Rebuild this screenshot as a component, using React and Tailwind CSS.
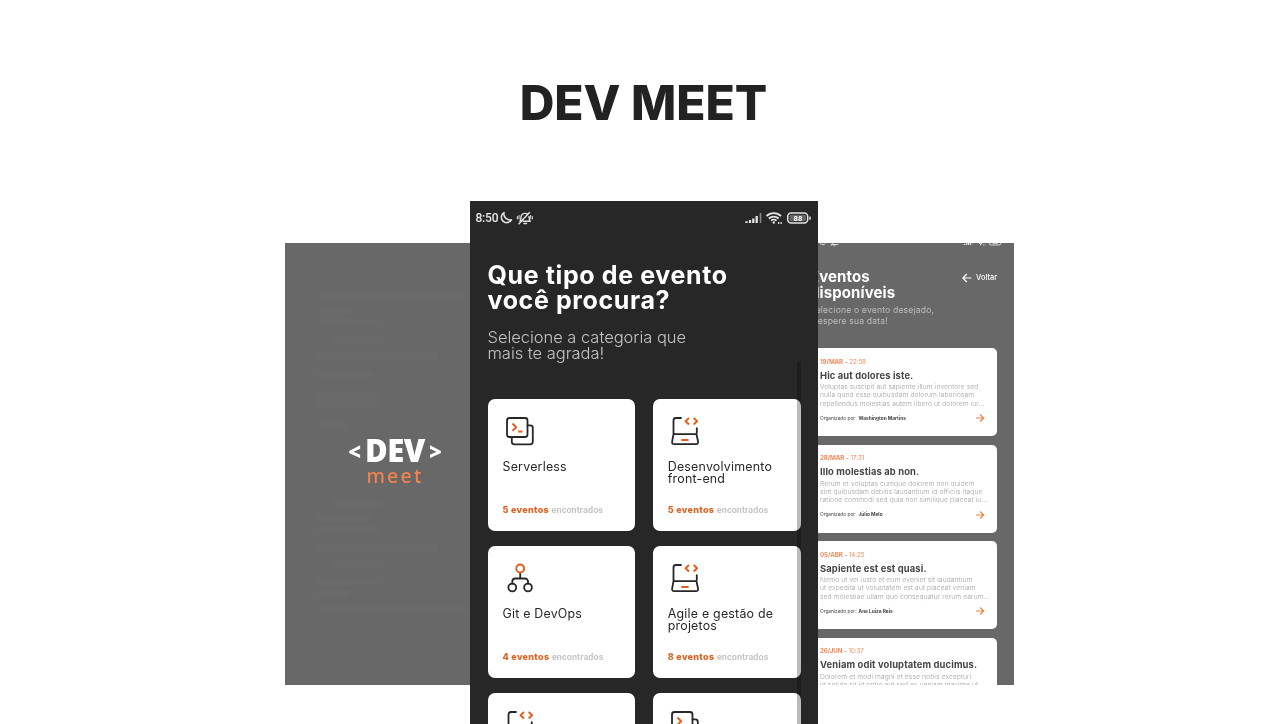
import React from "react";

const INK = "#272727";
const ORANGE = "#e4601f";

const ServerlessIcon = () => (
  <svg className="block" width="34" height="34" viewBox="0 0 34 34" fill="none" stroke={INK} strokeWidth="1.8" strokeLinecap="round" strokeLinejoin="round">
    <rect x="4" y="4" width="20.5" height="19" rx="2.5" />
    <path d="M24.500 11.300h2.800a2.500 2.500 0 0 1 2.500 2.500v14a2.500 2.500 0 0 1-2.500 2.500h-16a2.500 2.500 0 0 1-2.500-2.500V23" />
    <path d="M9.500 9.500l3.600 3.700-3.600 3.700M15.200 17.600h4.300" stroke={ORANGE} strokeWidth="2" strokeLinecap="butt" />
  </svg>
);

const LaptopIcon = () => (
  <svg className="block" width="34" height="34" viewBox="0 0 34 34" fill="none" stroke={INK} strokeWidth="1.8" strokeLinecap="round" strokeLinejoin="round">
    <path d="M13 4H8A2.500 2.500 0 0 0 5.500 6.500v13.700h22.500c.7 0 .8-1 .8-1.700v-4.300M5.500 20.200l-1.400 7.500a2 2 0 0 0 2 2.500h22a2 2 0 0 0 2-2.500l-1.600-7.500" />
    <path d="M21 3.900l-3.400 3.300 3.400 3.300M25.700 3.900l3.400 3.300-3.400 3.300M13.300 26h7.300" stroke={ORANGE} strokeWidth="2" strokeLinecap="butt" />
  </svg>
);

const GitIcon = () => (
  <svg className="block" width="34" height="34" viewBox="0 0 34 34" fill="none" stroke={INK} strokeWidth="1.8" strokeLinecap="round" strokeLinejoin="round">
    <circle cx="9.300" cy="26.500" r="3.900" />
    <circle cx="25" cy="26.500" r="3.900" />
    <path d="M9.300 22.500v-2a3 3 0 0 1 3-3H22a3 3 0 0 1 3 3v2M17.200 17v-5" />
    <circle cx="17.200" cy="7.500" r="3.900" stroke={ORANGE} strokeWidth="2" />
  </svg>
);

const StatusLeft = () => (
  <svg className="block" width="36" height="16" viewBox="0 0 36 16" fill="none" stroke="#e4e4e4" strokeWidth="1.4" strokeLinecap="round" strokeLinejoin="round">
    <path d="M6 2.600A5.400 5.400 0 1 0 13.500 9.800C9.700 10.800 5 7.500 6 2.600z" strokeWidth="1.500" />
    <path d="M22 11.300c1.500-1.500.5-4 1.500-6 1.200-2.300 4.500-2.600 6-.8M31 6.500c.3 2 .2 3.700 1.200 4.800h-7M26 13.500h2.500M21 13.700L31.500 2.500" />
    <path d="M19.300 6.500v2.500M21 5.500v3.500M32.700 5.500v3M34.300 6.500v2.500" strokeWidth="1" />
  </svg>
);

const StatusRight = () => (
  <svg className="block" width="66" height="16" viewBox="0 0 66 16" fill="none" stroke="#e4e4e4">
    <path d="M1.500 13v-1.800M5 13v-3M8.300 13V8.500M11.700 13V6" strokeWidth="2.300" />
    <path d="M15.500 13V3" stroke="#888" strokeWidth="1.600" />
    <path d="M21.500 6.200c4-4 10.500-4 14.500 0M23.800 8.500c2.800-2.600 7-2.600 9.900 0M26 10.700c1.500-1.400 4-1.400 5.500 0" strokeWidth="1.800" />
    <circle cx="28.800" cy="12.500" r="1.200" fill="#e4e4e4" stroke="none" />
    <path d="M33 13h1.300M35.500 13h1.300" strokeWidth="1.800" />
    <rect x="42.700" y="3" width="20" height="10" rx="3.500" strokeWidth="1.500" />
    <path d="M65 6.500v3.300" strokeWidth="1.500" />
    <rect x="44.500" y="4.800" width="16.500" height="6.500" rx="1.500" fill="#666" stroke="none" />
    <text x="52.900" y="10.800" textAnchor="middle" fill="#fff" stroke="none" fontFamily="Roboto, sans-serif" fontWeight="700" fontSize="7.8">88</text>
  </svg>
);

const categories = [
  { icon: ServerlessIcon, lines: ["Serverless"], count: 5 },
  { icon: LaptopIcon, lines: ["Desenvolvimento", "front-end"], count: 5 },
  { icon: GitIcon, lines: ["Git e DevOps"], count: 4 },
  { icon: LaptopIcon, lines: ["Agile e gestão de", "projetos"], count: 8 },
  { icon: LaptopIcon, lines: [], count: 0 },
  { icon: ServerlessIcon, lines: [], count: 0 },
];

const CategoryCard = ({ icon: Icon, lines, count }) => (
  <div className="h-[132px] rounded-[7px] bg-white px-[15px] pt-[15px]">
    <div className="h-[47px]"><Icon /></div>
    <div className="h-[42.500px] text-[12.4px] leading-[12.4px] tracking-[0.22px] text-[#272727]">
      {lines.map((l) => <div key={l} className="whitespace-nowrap">{l}</div>)}
    </div>
    {count > 0 && (
      <div className="flex items-baseline gap-[3px] whitespace-nowrap text-[9px] leading-[14px]">
        <b className="font-extrabold tracking-[0.32px] text-[#e0601f]">{count} eventos</b>
        <span className="-ml-[0.500px] font-['Roboto',sans-serif] font-semibold tracking-[0.1px] text-[#c3c3c3]">encontrados</span>
      </div>
    )}
  </div>
);

const events = [
  {
    date: "19/MAR", time: "22:58", title: "Hic aut dolores iste.", by: "Washington Martins",
    text: ["Voluptas suscipit aut sapiente illum inventore sed", "nulla quod esse quibusdam dolorum laboriosam", "repellendus molestias autem libero ut dolorem iur..."],
  },
  {
    date: "28/MAR", time: "17:31", title: "Illo molestias ab non.", by: "Júlio Melo",
    text: ["Rerum et voluptas cumque dolorem non quidem", "sint quibusdam debitis laudantium id officiis itaque", "ratione commodi sed quia non similique placeat iu..."],
  },
  {
    date: "05/ABR", time: "14:25", title: "Sapiente est est quasi.", by: "Ana Luiza Reis",
    text: ["Nemo ut vel iusto et eum eveniet sit laudantium", "ut expedita ut voluptatem est aut placeat veniam", "sed molestiae ullam quo consequatur rerum earum..."],
  },
  {
    date: "26/JUN", time: "10:37", title: "Veniam odit voluptatem ducimus.", by: "",
    text: ["Dolorem et modi magni et esse nobis excepturi", "id soluta sit id optio aut sed ex veniam maxime ut"],
  },
];

const EventCard = ({ date, time, title, text, by }) => (
  <div className="h-[88px] shrink-0 rounded-[5px] bg-white pt-[8.500px] pr-[8px] pl-[9px] whitespace-nowrap">
    <div className="h-[10px] text-[6.2px] leading-[10px] tracking-[-0.07px] text-[#f08a5c]">
      <b>{date}</b> <b className="text-[#999]">-</b> {time}
    </div>
    <div className="mt-[2px] h-[13px] text-[9.4px] leading-[13px] font-bold tracking-[0.13px] text-[#454545]">{title}</div>
    <div className="mt-[1.500px] text-[6.7px] leading-[8.4px] font-light tracking-[0.12px] text-[#a2a2a2]">
      {text.map((l) => <div key={l}>{l}</div>)}
    </div>
    {by && (
      <div className="mt-[5px] flex h-[10px] items-center text-[4.800px] text-[#454545]">
        <span>Organizado por:</span>
        <b className="ml-[2px]">{by}</b>
        <svg className="mr-[4px] ml-auto" width="10" height="10" viewBox="0 0 10 10" fill="none" stroke="#f0803c" strokeWidth="1.100">
          <path d="M1 5h7.500M5.200 1.500L8.700 5 5.200 8.500" />
        </svg>
      </div>
    )}
  </div>
);

const codeBars = [
  "mt-[50px] w-[150px]", "mt-[8px] w-[34px]", "mt-[4px] ml-[4px] w-[63px]", "mt-[10px] ml-[17px] w-[50px]", "mt-[10px] w-[122px]",
  "mt-[11px] w-[58px]", "mt-[14px] w-[62px]", "mt-[1px] w-[62px]", "mt-[14px] w-[33px]",
];
const codeBarsBottom = [
  "mt-[10px] ml-[17px] w-[50px]", "mt-[7px] w-[54px]", "mt-[5px] w-[62px]", "mt-[11px] w-[122px]", "mt-[9px] ml-[17px] w-[50px]",
  "mt-[11px] w-[67px]", "mt-[5px] w-[34px]", "mt-[9px] ml-[4px] w-[147px]",
];

const SplashScreen = () => (
  <div className="mt-[42px] h-[442px] w-[185px] overflow-hidden bg-[#686868]">
    <div className="h-[192px] pl-[31px]">
      <div className="flow-root">{codeBars.map((c, i) => <div key={i} className={`h-[7px] bg-[#6a6a6a] ${c}`} />)}</div>
    </div>
    <div className="flex h-[55px] w-[220px] flex-col items-center">
      <div className="flex items-center font-['Open_Sans',sans-serif] leading-[27px] font-extrabold text-white">
        <span className="pt-[3px] text-[22px]">&lt;</span>
        <span className="mx-[4px] text-[31px] tracking-[-0.500px]">DEV</span>
        <span className="pt-[3px] text-[22px]">&gt;</span>
      </div>
      <div className="font-['Noto_Sans',sans-serif] text-[19.500px] leading-[22px] font-medium tracking-[2.200px] text-[#f0824f]">meet</div>
    </div>
    <div className="pl-[31px]">
      {codeBarsBottom.map((c, i) => <div key={i} className={`h-[7px] bg-[#6a6a6a] ${c}`} />)}
    </div>
  </div>
);

const CategoryScreen = () => (
  <div className="relative h-[523px] w-[348px] overflow-hidden bg-[#272727] px-[17.500px]">
    <div className="-mx-[12px] flex h-[34px] items-center text-[#e8e8e8]">
      <span className="font-['Roboto',sans-serif] text-[12px] font-medium tracking-[-0.2px]">8:50</span>
      <StatusLeft />
      <span className="mr-[2px] ml-auto"><StatusRight /></span>
    </div>
    <h2 className="mt-[27.500px] text-[25px] leading-[25.500px] font-bold tracking-[0.620px] whitespace-nowrap text-white">Que tipo de evento<br />você procura?</h2>
    <p className="mt-[15.500px] text-[16.500px] leading-[16.300px] font-light tracking-[-0.03px] whitespace-nowrap text-[#c4c4c4]">Selecione a categoria que<br />mais te agrada!</p>
    <div className="mt-[37px] grid grid-cols-2 gap-x-[17.500px] gap-y-[15.300px]">
      {categories.map((c, i) => <CategoryCard key={i} {...c} />)}
    </div>
    <div className="absolute top-[161px] right-[17px] bottom-0 w-[4px] bg-[#bbb] mix-blend-multiply" />
  </div>
);

const EventsScreen = () => (
  <div className="mt-[42px] flex h-[442px] w-[196px] justify-end overflow-hidden bg-[#686868]">
    <div className="w-[220px] shrink-0 px-[17px]">
      <div className="-mx-[11px] h-[4px] overflow-hidden">
        <div className="-mt-[6px] flex h-[10px] items-center justify-between pl-[17px]">
          <svg width="24" height="10" viewBox="0 0 36 16" fill="none" stroke="#e4e4e4" strokeWidth="1.5">
            <path d="M5.500 2.500A5.200 5.200 0 1 0 12.300 10M21 12h12M25 14h3M21 14L31 3" />
          </svg>
          <span className="mr-[5px] origin-right scale-[.6]"><StatusRight /></span>
        </div>
      </div>
      <div className="mt-[22px] flex items-start justify-between text-white">
        <h2 className="-ml-[1px] text-[15px] leading-[15.500px] font-bold tracking-[0.100px]">Eventos<br />disponíveis</h2>
        <div className="flex h-[18px] items-center gap-[4px] text-[7.4px] font-medium">
          <svg width="10" height="10" viewBox="0 0 10 10" fill="none" stroke="#fff" strokeWidth="1.200"><path d="M9.500 5H1M4.800 1L.8 5l4 4" /></svg>
          Voltar
        </div>
      </div>
      <p className="-ml-[1px] mt-[5px] text-[8.600px] leading-[11px] tracking-[0.17px] whitespace-nowrap text-[#bdbdbd]">Selecione o evento desejado,<br />e espere sua data!</p>
      <div className="mt-[21px] flex flex-col gap-[8.500px]">
        {events.map((e) => <EventCard key={e.title} {...e} />)}
      </div>
    </div>
  </div>
);

export default function App() {
  return (
    <main className="h-[724px] w-[1287px] overflow-hidden bg-white font-['Inter',sans-serif]">
      <h1 className="h-[201px] pt-[79px] text-center text-[48px] leading-[48px] font-extrabold text-[#222]">DEV MEET</h1>
      <div className="flex items-start pl-[285px]">
        <SplashScreen />
        <CategoryScreen />
        <EventsScreen />
      </div>
    </main>
  );
}
